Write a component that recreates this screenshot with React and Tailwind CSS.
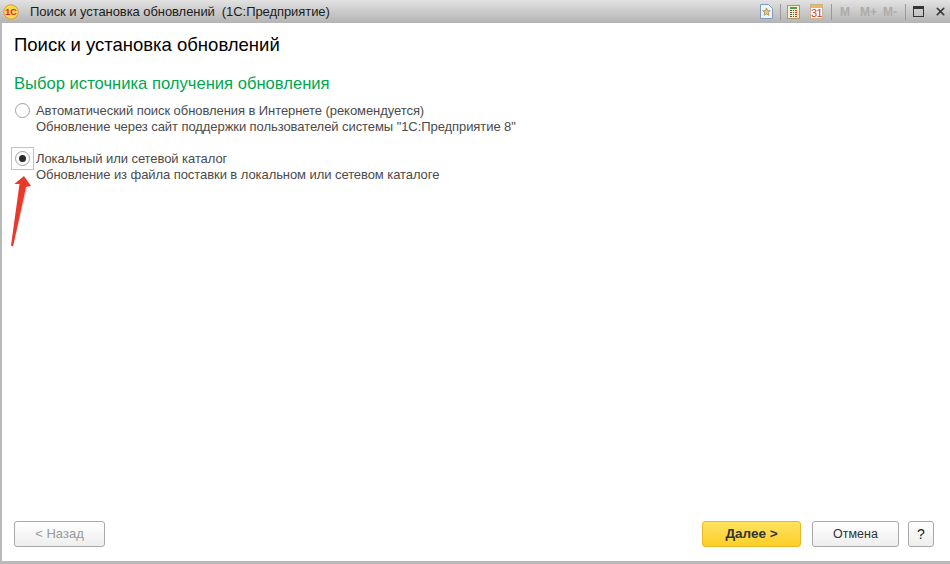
import { X } from "lucide-react";

function RadioOption({ checked, title, note }) {
  return (
    <div className="flex items-start">
      <div
        className={`flex h-[23px] w-[23px] shrink-0 items-center justify-center border ${
          checked ? "border-[#f5c33b]" : "border-transparent"
        }`}
      >
        <div className="flex h-[15px] w-[15px] items-center justify-center rounded-full border border-[#a0a0a0] bg-white">
          {checked ? <div className="h-[7px] w-[7px] rounded-full bg-[#2b2b2b]" /> : null}
        </div>
      </div>
      <div className="ml-[2px] mt-[4px] text-[13px] leading-[16px] tracking-[-0.07px] text-[#4b4b4b]">
        <p>{title}</p>
        <p>{note}</p>
      </div>
    </div>
  );
}

function Logo() {
  return (
    <svg width="16" height="16" viewBox="0 0 16 16">
      <circle cx="8" cy="8" r="7.2" fill="#f9d94e" stroke="#e39a3c" />
      <text x="8" y="11" textAnchor="middle" fontSize="9" fontWeight="700" fill="#d2262a" fontFamily="Liberation Sans">
        1С
      </text>
    </svg>
  );
}

function FavoriteIcon() {
  return (
    <svg width="13" height="15" viewBox="0 0 13 15">
      <path d="M.5.5h8l4 4v10H.5z" fill="#eef4fb" stroke="#7f9cc0" />
      <path d="M6.5 4l1.1 2.6 2.8.2-2.1 1.8.7 2.8-2.5-1.5-2.5 1.5.7-2.8-2.1-1.8 2.8-.2z" fill="#e8c878" stroke="#8f7a4a" strokeWidth=".6" />
    </svg>
  );
}

function CalcIcon() {
  const keys = [0, 1, 2, 3, 4, 5, 6, 7, 8, 9, 10, 11];
  return (
    <div className="flex h-[14px] w-[13px] flex-col border border-[#a39a68] bg-[#f6efc4] px-[2px] pt-[1px]">
      <div className="h-[2px] bg-[#4f9a58]" />
      <div className="mt-[1px] grid grid-cols-3 gap-[1px]">
        {keys.map((key) => (
          <div key={key} className={`h-[1px] ${key % 3 === 2 ? "bg-[#c0392b]" : "bg-[#555]"}`} />
        ))}
      </div>
    </div>
  );
}

function CalendarIcon() {
  return (
    <div className="flex h-[15px] w-[13px] flex-col overflow-hidden border border-[#c9b48c] bg-white">
      <div className="h-[3px] shrink-0 bg-[#eab85a]" />
      <div className="text-center text-[11px] leading-[11px] tracking-[-0.5px] text-[#d0391f]">31</div>
    </div>
  );
}

function Divider() {
  return <div className="h-[16px] w-px bg-[#9a9a9a]" />;
}

function TitleBar() {
  return (
    <div className="flex h-[23px] shrink-0 items-center bg-gradient-to-b from-[#e2e2e2] to-[#b4b4b4] pl-[3px] text-[13px] tracking-[-0.07px] text-[#1c1c1c]">
      <Logo />
      <span className="ml-[11px] whitespace-pre">Поиск и установка обновлений  (1С:Предприятие)</span>
      <div className="ml-auto flex items-center">
        <FavoriteIcon />
        <div className="ml-[7px]"><Divider /></div>
        <div className="ml-[6px]"><CalcIcon /></div>
        <div className="ml-[10px]"><CalendarIcon /></div>
        <div className="ml-[8px]"><Divider /></div>
        <div className="ml-[8px] flex text-[12px] font-bold leading-[14px] tracking-normal text-[#b0aba6]">
          <span>M</span>
          <span className="ml-[10px]">M+</span>
          <span className="ml-[6px]">M-</span>
        </div>
        <div className="ml-[8px]"><Divider /></div>
        <div className="ml-[7px] h-[11px] w-[11px] border border-t-[3px] border-[#333]" />
        <X size={13} strokeWidth={3} className="ml-[10px] mr-[3px] text-[#333]" />
      </div>
    </div>
  );
}

function Button({ children, className }) {
  return (
    <button className={`flex h-[26px] items-center justify-center rounded-[3px] border ${className}`}>
      {children}
    </button>
  );
}

export default function App() {
  return (
    <div className="relative flex h-[564px] w-[950px] flex-col overflow-hidden bg-white font-['Liberation_Sans',sans-serif]">
      <TitleBar />
      <div className="flex flex-1 flex-col border-b-[3px] border-l-2 border-[#b9b9b9] pl-[12px] pr-[16px]">
        <h1 className="mt-[11px] text-[18.5px] leading-[22px] text-black">Поиск и установка обновлений</h1>
        <h2 className="mt-[18px] text-[16.6px] leading-[20px] text-[#00a650]">Выбор источника получения обновления</h2>
        <div className="ml-[-3px] mt-[5px] flex flex-col gap-[12px]">
          <RadioOption
            title="Автоматический поиск обновления в Интернете (рекомендуется)"
            note={'Обновление через сайт поддержки пользователей системы "1С:Предприятие 8"'}
          />
          <RadioOption
            checked
            title="Локальный или сетевой каталог"
            note="Обновление из файла поставки в локальном или сетевом каталоге"
          />
        </div>
        <div className="mb-[14px] mt-auto flex items-center">
          <Button className="w-[91px] border-[#a8a8a8] bg-gradient-to-b from-white to-[#eeeeee] text-[13px] text-[#9a9a9a]">
            &lt; Назад
          </Button>
          <Button className="ml-auto w-[99px] border-[#e8b828] bg-gradient-to-b from-[#ffe25e] to-[#fccf22] text-[13.5px] font-bold text-[#333]">
            Далее &gt;
          </Button>
          <Button className="ml-[11px] w-[87px] border-[#a8a8a8] bg-gradient-to-b from-white to-[#eeeeee] text-[12.5px] text-[#333]">
            Отмена
          </Button>
          <Button className="ml-[9px] w-[26px] border-[#a8a8a8] bg-gradient-to-b from-white to-[#eeeeee] text-[14px] text-[#222]">
            ?
          </Button>
        </div>
      </div>
      <svg className="absolute left-[8px] top-[170px]" width="30" height="80" viewBox="0 0 30 80">
        <path d="M5 77 L14 16 L19.5 18 Z" fill="#8a8a8a" opacity="0.35" />
        <path d="M3 75.5 L11.5 14 L6.3 14 L16 6 L23 16 L18 17 L5 76.5 Z" fill="#e8392b" />
      </svg>
    </div>
  );
}
